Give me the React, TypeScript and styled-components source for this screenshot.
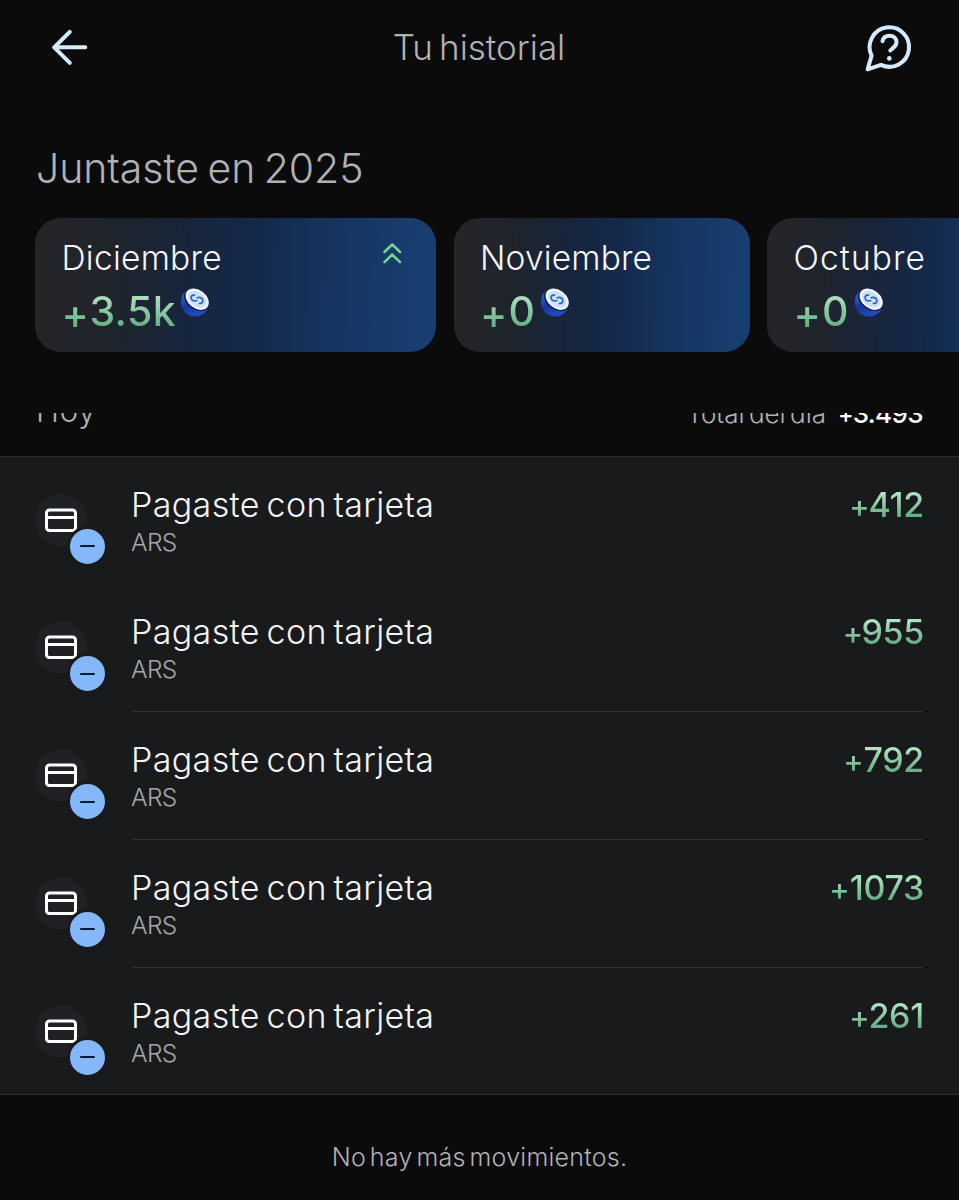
import React from "react";
import styled, { createGlobalStyle, css } from "styled-components";

const GlobalStyle = createGlobalStyle`
  * { box-sizing: border-box; }
  html, body { margin: 0; padding: 0; background: #0b0b0b; }
  body {
    font-family: Inter, "Liberation Sans", sans-serif;
    font-weight: 300;
    overflow: hidden;
  }
`;

const Screen = styled.main`
  width: 959px;
  height: 1200px;
  display: flex;
  flex-direction: column;
  overflow: hidden;
  background: #0b0b0b;
`;

const TopBar = styled.header`
  height: 96px;
  flex: none;
  display: grid;
  grid-template-columns: 50px 1fr 50px;
  align-items: center;
  padding: 0 45px;
`;

const IconButton = styled.button`
  width: 50px;
  height: 50px;
  padding: 0;
  border: 0;
  background: none;
  color: #d3eaff;
  display: block;
`;

type TextProps = { $track?: number; $word?: number };
const tracking = css<TextProps>`
  letter-spacing: ${(p) => p.$track ?? 0}px;
  word-spacing: ${(p) => p.$word ?? 0}px;
  white-space: nowrap;
`;

const Title = styled.h1<TextProps>`
  margin: 0 1px 2px 0;
  text-align: center;
  font-size: 35px;
  line-height: 44px;
  font-weight: 300;
  color: #b1b1b5;
  ${tracking}
`;

const Heading = styled.h2<TextProps>`
  margin: 46px 0 0;
  padding-left: 36px;
  height: 76px;
  flex: none;
  font-size: 41px;
  line-height: 52px;
  font-weight: 300;
  color: #b1b1b5;
  ${tracking}
`;

const Months = styled.section`
  display: flex;
  flex: none;
  gap: 17.5px;
  padding-left: 35px;
  height: 134px;
`;

const MonthCard = styled.article<{ $width: number }>`
  flex: none;
  width: ${(p) => p.$width}px;
  height: 134px;
  border-radius: 26px;
  padding: 18px 27px 0 26.5px;
  background: linear-gradient(92deg, #252528 0%, #1f242c 20%, #17253c 38%, #14294b 55%, #163561 75%, #183f72 100%);
`;

const MonthHead = styled.div`
  display: flex;
  justify-content: space-between;
  height: 44px;
`;

const MonthName = styled.span<TextProps>`
  font-size: 33.5px;
  line-height: 44px;
  color: #f4f5f8;
  ${tracking}
`;

const TrendIcon = styled.svg`
  width: 20px;
  height: 24px;
  margin: 5px 7px 0 0;
`;

const MonthValue = styled.div<{ $gap: number }>`
  display: flex;
  align-items: flex-start;
  gap: ${(p) => p.$gap}px;
`;

const greenText = css`
  background: linear-gradient(180deg, #b4e4c3 22%, #5faa7d 80%);
  -webkit-background-clip: text;
  background-clip: text;
  color: transparent;
`;

const MonthAmount = styled.span<TextProps>`
  font-size: 41px;
  line-height: 62px;
  font-weight: 500;
  ${tracking}
  ${greenText}
`;

const Sign = styled.span<{ $gap: number; $size?: number; $drop?: number }>`
  font-size: ${(p) => p.$size ?? 0.9}em;
  line-height: 0;
  vertical-align: ${(p) => -(p.$drop ?? 0.015)}em;
  letter-spacing: ${(p) => p.$gap}px;
`;

const CoinIcon = styled.svg`
  width: 30px;
  height: 30px;
  margin-top: 8px;
`;

const Scroll = styled.section`
  margin-top: 61px;
  flex: 1;
  min-height: 0;
  overflow: hidden;
`;

const DayBar = styled.div`
  height: 42.6px;
  padding: 0 36px;
  display: flex;
  align-items: flex-start;
  justify-content: space-between;
`;

const DayName = styled.span<TextProps>`
  margin-top: -22px;
  font-size: 31px;
  line-height: 40px;
  color: #b1b1b5;
  ${tracking}
`;

const DayTotal = styled.div`
  margin-top: -18px;
  display: flex;
  gap: 12px;
  font-size: 26px;
  line-height: 38px;
  color: #b1b1b5;
`;

const TotalLabel = styled.span<TextProps>`
  ${tracking}
`;

const TotalValue = styled.strong<TextProps>`
  font-weight: 500;
  color: #ffffff;
  ${tracking}
`;

const List = styled.ul`
  margin: 0;
  padding: 0;
  list-style: none;
  background: #191a1c;
  border-top: 1px solid #2b2c2f;
  border-bottom: 1px solid #2f3033;
`;

const Row = styled.li<{ $divided: boolean }>`
  height: 127.8px;
  display: flex;
  padding: 0 35px;
  border-bottom: ${(p) => (p.$divided ? "1px solid #131416" : "0")};
  &:last-child {
    height: 126.6px;
  }
`;

const RowIcon = styled.div`
  position: relative;
  flex: none;
  width: 52px;
  height: 52px;
  margin: 37px 44px 0 0;
  border-radius: 50%;
  background: #202124;
`;

const CardIcon = styled.svg`
  display: block;
  width: 52px;
  height: 52px;
`;

const Badge = styled.span`
  position: absolute;
  left: 31.5px;
  top: 32px;
  width: 41px;
  height: 41px;
  border-radius: 50%;
  border: 3px solid #191a1c;
  background: #84b8fb;
  display: flex;
  align-items: center;
  justify-content: center;
  &::after {
    content: "";
    width: 15px;
    height: 2px;
    border-radius: 1px;
    background: #10192a;
  }
`;

const RowBody = styled.div<{ $divided: boolean }>`
  flex: 1;
  display: flex;
  justify-content: space-between;
  align-items: flex-start;
  padding-top: 26px;
  margin-bottom: -1px;
  border-bottom: ${(p) => (p.$divided ? "1px solid #2c2d31" : "0")};
`;

const RowText = styled.div`
  display: flex;
  flex-direction: column;
`;

const RowTitle = styled.span<TextProps>`
  font-size: 34px;
  line-height: 44px;
  color: #f4f4f6;
  ${tracking}
`;

const RowSub = styled.span<TextProps>`
  font-size: 24.5px;
  line-height: 30px;
  color: #a6a6aa;
  ${tracking}
`;

const RowAmount = styled.span<TextProps>`
  font-size: 34px;
  line-height: 44px;
  font-weight: 500;
  ${tracking}
  ${greenText}
`;

const EndNote = styled.p<TextProps>`
  margin: 43.3px 0 0;
  text-align: center;
  font-size: 25px;
  line-height: 36px;
  color: #b1b1b5;
  ${tracking}
`;

const Coin = () => (
  <CoinIcon viewBox="0 0 30 30">
    <defs>
      <linearGradient id="coinSide" x1="0" y1="0" x2="0.7" y2="1">
        <stop offset="0" stopColor="#3a6fe0" />
        <stop offset="0.5" stopColor="#16369c" />
        <stop offset="1" stopColor="#2350c4" />
      </linearGradient>
    </defs>
    <path d="M6.2 2.6C2.6 5.6.4 10.6 1 16c.8 7 6.600 12.500 13.500 12.600 5.500 0 10.600-3 13-7.600Z" fill="url(#coinSide)" />
    <ellipse cx="16.400" cy="11.800" rx="13.700" ry="9.600" transform="rotate(38 16.400 11.800)" fill="#0b1c52" />
    <ellipse cx="17.200" cy="11.200" rx="12.900" ry="9.100" transform="rotate(38 17.200 11.200)" fill="#f2f7ff" />
    <ellipse cx="17.200" cy="11.200" rx="10.200" ry="7" transform="rotate(38 17.200 11.200)" fill="#c9e1fb" />
    <path
      d="M14.400 7.200C11.900 6.700 10.600 8.300 11.200 10.400c.7 2.200 3.300 3.200 5.500 2.200M17.200 9.700c2.300-1 4.900 0 5.500 2.200.6 2.200-.8 3.900-3.200 3.500"
      fill="none"
      stroke="#2a66b8"
      strokeWidth="1.700"
      strokeLinecap="round"
    />
  </CoinIcon>
);

type Month = {
  name: string;
  track: number;
  value: string;
  valueTrack: number;
  signGap: number;
  coinGap: number;
  width: number;
  up?: boolean;
};
const months: Month[] = [
  { name: "Diciembre", track: 0.25, value: "3.5k", valueTrack: 0.4, signGap: 0.5, coinGap: 4, width: 401, up: true },
  { name: "Noviembre", track: 0.15, value: "0", valueTrack: 0, signGap: 1, coinGap: 5.5, width: 296 },
  { name: "Octubre", track: 1.1, value: "0", valueTrack: 0, signGap: 1, coinGap: 5.5, width: 296 },
];

const movements = [
  { amount: "412", gap: -1.2, divided: false },
  { amount: "955", gap: -1.8, divided: true },
  { amount: "792", gap: -0.2, divided: true },
  { amount: "1073", gap: 0, divided: true },
  { amount: "261", gap: -1.2, divided: false },
];

export default function App() {
  return (
    <>
      <GlobalStyle />
      <Screen>
        <TopBar>
          <IconButton aria-label="Volver">
            <svg width="50" height="50" viewBox="0 0 50 50" fill="none" stroke="currentColor" strokeWidth="4" strokeLinecap="round" strokeLinejoin="round">
              <path d="M40.300 24.300H9.200M24.800 8.800 9.200 24.300l15.600 15.500" />
            </svg>
          </IconButton>
          <Title $track={0} $word={-3.8}>Tu historial</Title>
          <IconButton aria-label="Ayuda">
            <svg width="50" height="50" viewBox="0 0 50 50" fill="none" stroke="currentColor" strokeWidth="4" strokeLinecap="round" strokeLinejoin="round">
              <path d="M17 41.900A19.700 19.700 0 1 0 7.600 32.600L3.600 46.400Z" />
              <path d="M18.500 18.200c.6-3.500 3.500-5.500 7-5.500 4 0 7 2.800 7 6.600 0 4.500-3.500 5.200-6.200 8.200" />
              <path d="M25.300 35.300v.1" strokeWidth="4.600" />
            </svg>
          </IconButton>
        </TopBar>

        <Heading $track={-0.05} $word={-3}>Juntaste en 2025</Heading>

        <Months>
          {months.map((m) => (
            <MonthCard key={m.name} $width={m.width}>
              <MonthHead>
                <MonthName $track={m.track}>{m.name}</MonthName>
                {m.up && (
                  <TrendIcon viewBox="0 0 20 24" fill="none" stroke="#74d592" strokeWidth="2.500" strokeLinecap="round" strokeLinejoin="round">
                    <path d="M2.500 11 10.200 3.300 18 11M2.500 21.200l7.700-7.700 7.800 7.700" />
                  </TrendIcon>
                )}
              </MonthHead>
              <MonthValue $gap={m.coinGap}>
                <MonthAmount $track={m.valueTrack}>
                  <Sign $gap={m.signGap} $size={1} $drop={0.075}>+</Sign>
                  {m.value}
                </MonthAmount>
                <Coin />
              </MonthValue>
            </MonthCard>
          ))}
        </Months>

        <Scroll>
          <DayBar>
            <DayName $track={0.8}>Hoy</DayName>
            <DayTotal>
              <TotalLabel $track={0} $word={-3}>Total del día</TotalLabel>
              <TotalValue $track={-0.6}>
                <Sign $gap={-1}>+</Sign>3.493
              </TotalValue>
            </DayTotal>
          </DayBar>
          <List>
            {movements.map((m) => (
              <Row key={m.amount} $divided={m.divided}>
                <RowIcon>
                  <CardIcon viewBox="0 0 52 52" fill="none" stroke="#ffffff" strokeWidth="3">
                    <rect x="11.500" y="16" width="29" height="20.500" rx="3" />
                    <path d="M11.500 23.500h29" />
                  </CardIcon>
                  <Badge />
                </RowIcon>
                <RowBody $divided={m.divided}>
                  <RowText>
                    <RowTitle $track={0.37} $word={-3.3}>Pagaste con tarjeta</RowTitle>
                    <RowSub $track={-0.6}>ARS</RowSub>
                  </RowText>
                  <RowAmount $track={-0.3}>
                    <Sign $gap={m.gap}>+</Sign>
                    {m.amount}
                  </RowAmount>
                </RowBody>
              </Row>
            ))}
          </List>
          <EndNote $track={0.25} $word={-3.4}>No hay más movimientos.</EndNote>
        </Scroll>
      </Screen>
    </>
  );
}
